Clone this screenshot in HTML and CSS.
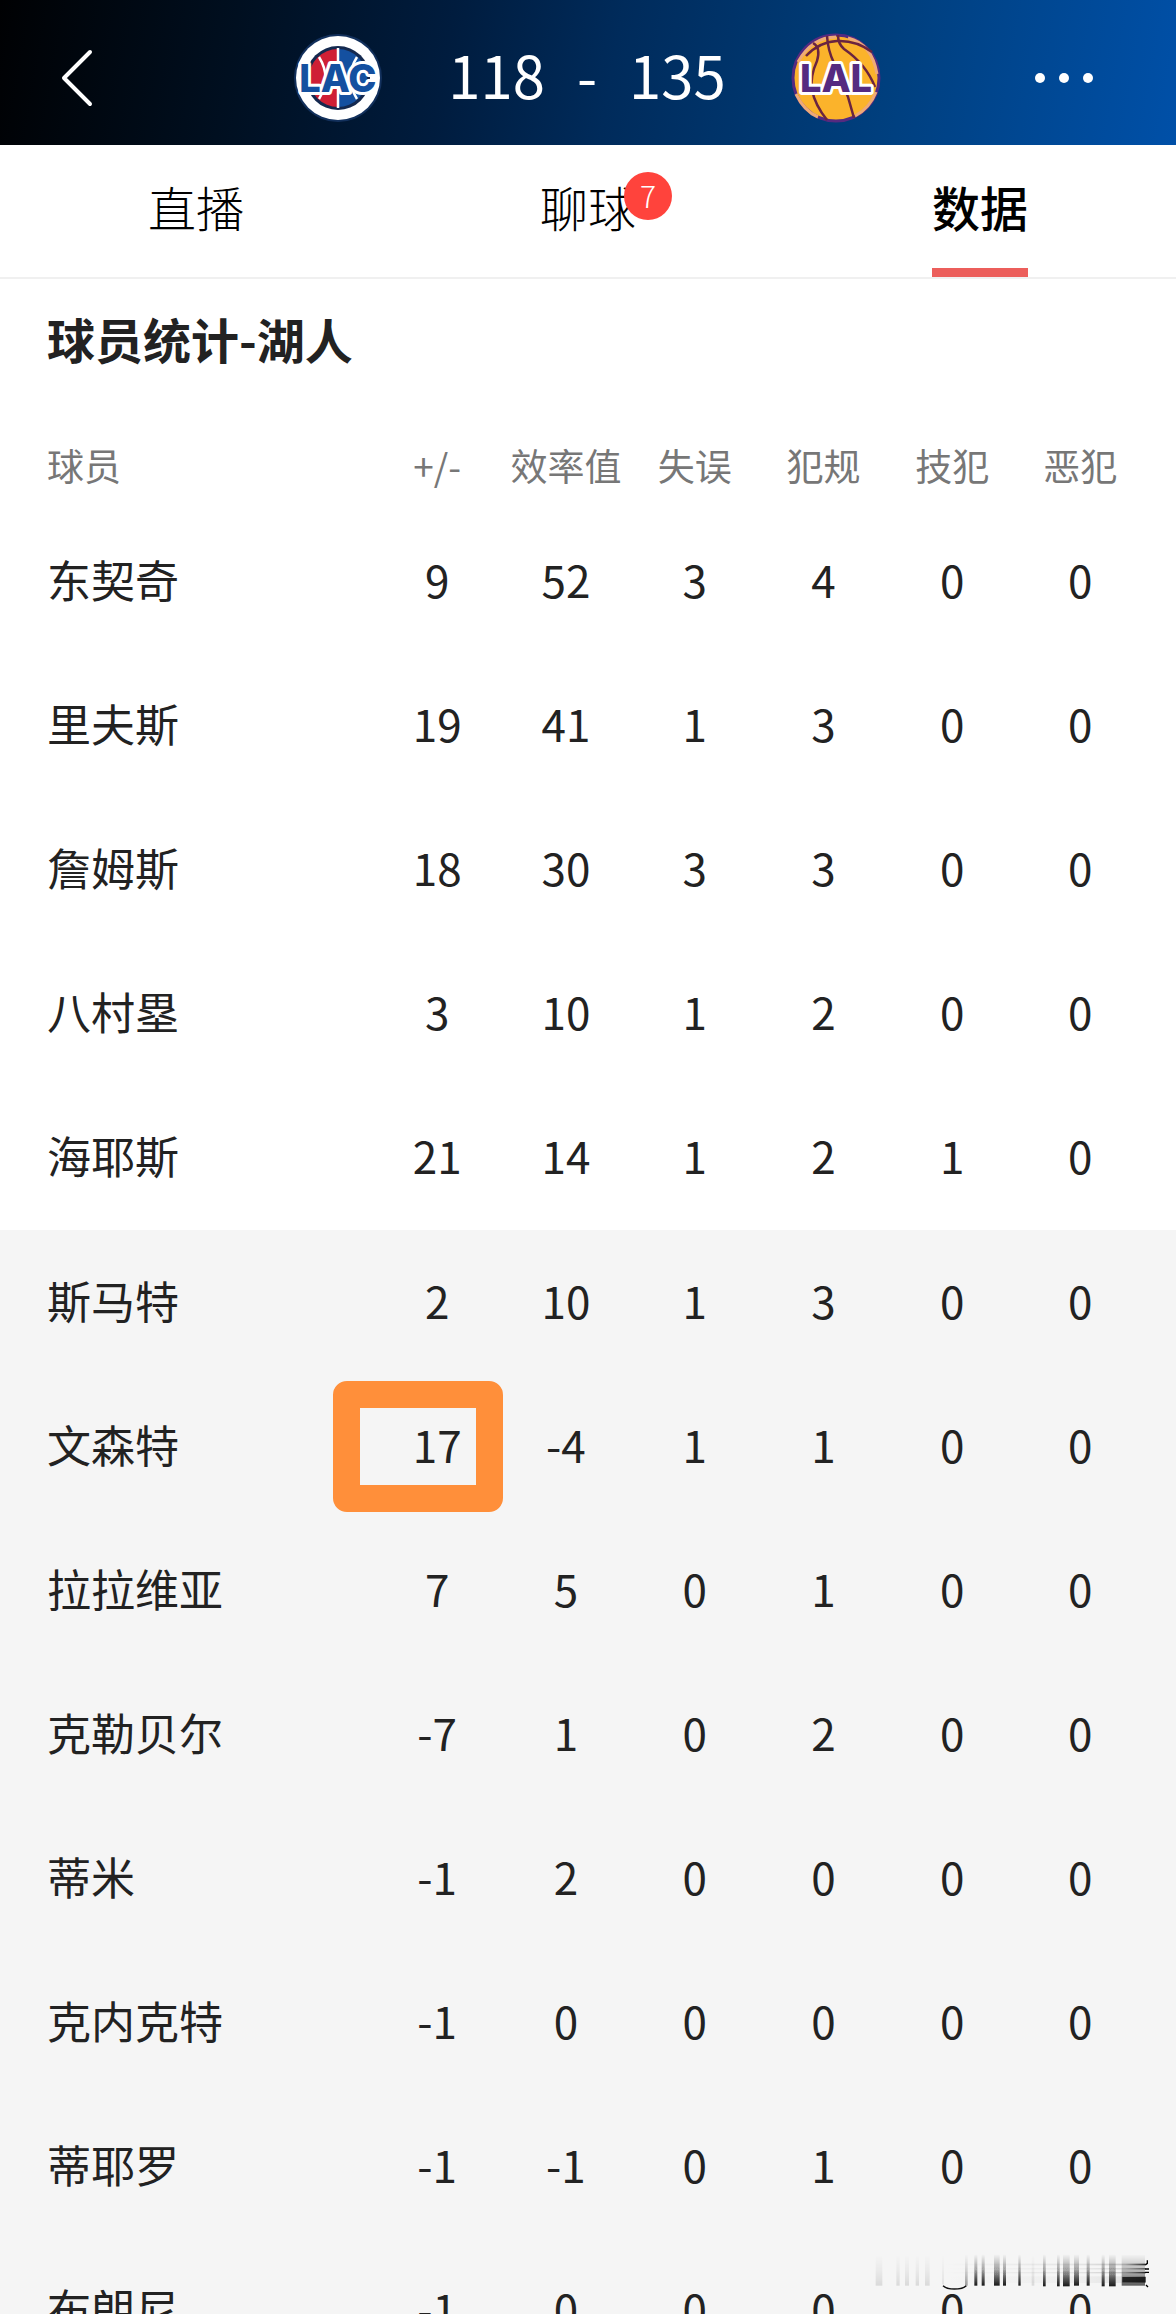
FILE: index.html
```html
<!DOCTYPE html>
<html lang="zh-CN">
<head>
    <meta charset="UTF-8">
    <meta name="viewport" content="width=device-width, initial-scale=1.0">
    <title>118 - 135</title>
    <link rel="stylesheet" href="styles.css">
</head>
<body>
    <header class="topbar">
        <button class="icon-button" type="button" aria-label="返回">
            <svg width="34" height="58" viewBox="0 0 34 58" fill="none" stroke="#fff" stroke-width="4" stroke-linecap="round" stroke-linejoin="round">
                <path d="M30 3L4 29L30 55"/>
            </svg>
        </button>
        <div class="match">
            <svg class="logo" viewBox="0 0 92 92">
                <circle cx="46" cy="46" r="44" fill="#12305c"/>
                <circle cx="46" cy="46" r="42" fill="#fff"/>
                <circle cx="46" cy="46" r="32" fill="#14294f"/>
                <path d="M46 17A29 29 0 0 0 46 75Z" fill="#cf1f35"/>
                <path d="M46 17A29 29 0 0 1 46 75Z" fill="#1450a0"/>
                <path d="M46 16V76M27 25Q40 46 27 67M65 25Q52 46 65 67" fill="none" stroke="#fff" stroke-width="2.5"/>
                <text class="logo-text lac" x="46" y="60">LAC</text>
            </svg>
            <div class="score">
                <span>118</span>
                <span>-</span>
                <span>135</span>
            </div>
            <svg class="logo" viewBox="0 0 92 92">
                <circle cx="46" cy="46" r="43" fill="#fbb32b" stroke="#552a80" stroke-width="3"/>
                <path d="M8 30Q22 5 46 5M58 6Q82 12 87 42M6 62Q14 79 28 85M65 84Q80 76 86 60" fill="none" stroke="#eeaa78" stroke-width="3"/>
                <g fill="none" stroke="#6a2440" stroke-width="2.5">
                    <path d="M16 24Q29 10 47 9Q66 8 82 20"/>
                    <path d="M23 11Q31 15 27 29Q20 44 22 58Q25 73 37 88"/>
                    <path d="M37 4Q38 19 44 31L58 65L64 86"/>
                    <path d="M48 3Q48 12 54 17Q76 32 85 55"/>
                </g>
                <text class="logo-text lal" x="46" y="60">LAL</text>
            </svg>
        </div>
        <button class="icon-button" type="button" aria-label="更多">
            <svg width="60" height="12" viewBox="0 0 60 12" fill="#fff">
                <circle cx="6" cy="6" r="5"/>
                <circle cx="30" cy="6" r="5"/>
                <circle cx="54" cy="6" r="5"/>
            </svg>
        </button>
    </header>

    <nav class="tabs">
        <a class="tab" href="#live">直播</a>
        <a class="tab" href="#chat"><span class="tab-label">聊球<span class="badge">7</span></span></a>
        <a class="tab active" href="#stats">数据</a>
    </nav>

    <main class="stats" id="stats">
        <h1>球员统计-湖人</h1>
        <table>
            <thead>
                <tr>
                    <th>球员</th>
                    <th>+/-</th>
                    <th>效率值</th>
                    <th>失误</th>
                    <th>犯规</th>
                    <th>技犯</th>
                    <th>恶犯</th>
                </tr>
            </thead>
            <tbody>
                <tr><td>东契奇</td><td>9</td><td>52</td><td>3</td><td>4</td><td>0</td><td>0</td></tr>
                <tr><td>里夫斯</td><td>19</td><td>41</td><td>1</td><td>3</td><td>0</td><td>0</td></tr>
                <tr><td>詹姆斯</td><td>18</td><td>30</td><td>3</td><td>3</td><td>0</td><td>0</td></tr>
                <tr><td>八村塁</td><td>3</td><td>10</td><td>1</td><td>2</td><td>0</td><td>0</td></tr>
                <tr><td>海耶斯</td><td>21</td><td>14</td><td>1</td><td>2</td><td>1</td><td>0</td></tr>
            </tbody>
            <tbody class="bench">
                <tr><td>斯马特</td><td>2</td><td>10</td><td>1</td><td>3</td><td>0</td><td>0</td></tr>
                <tr><td>文森特</td><td class="marked">17</td><td>-4</td><td>1</td><td>1</td><td>0</td><td>0</td></tr>
                <tr><td>拉拉维亚</td><td>7</td><td>5</td><td>0</td><td>1</td><td>0</td><td>0</td></tr>
                <tr><td>克勒贝尔</td><td>-7</td><td>1</td><td>0</td><td>2</td><td>0</td><td>0</td></tr>
                <tr><td>蒂米</td><td>-1</td><td>2</td><td>0</td><td>0</td><td>0</td><td>0</td></tr>
                <tr><td>克内克特</td><td>-1</td><td>0</td><td>0</td><td>0</td><td>0</td><td>0</td></tr>
                <tr><td>蒂耶罗</td><td>-1</td><td>-1</td><td>0</td><td>1</td><td>0</td><td>0</td></tr>
                <tr><td>布朗尼</td><td>-1</td><td>0</td><td>0</td><td>0</td><td>0</td><td>0</td></tr>
            </tbody>
        </table>
    </main>

    <!-- smeared watermark strip -->
    <svg class="watermark" width="280" height="38" viewBox="0 0 840 114" aria-hidden="true">
        <defs>
            <linearGradient id="fade" x1="0" y1="0" x2="0" y2="1">
                <stop offset="0" stop-color="#111" stop-opacity="0"/>
                <stop offset="0.5" stop-color="#111" stop-opacity="0.35"/>
                <stop offset="1" stop-color="#000" stop-opacity="0.9"/>
            </linearGradient>
            <linearGradient id="side" x1="0" y1="0" x2="1" y2="0">
                <stop offset="0" stop-color="#111" stop-opacity="0"/>
                <stop offset="0.7" stop-color="#111" stop-opacity="0.08"/>
                <stop offset="0.9" stop-color="#111" stop-opacity="0.2"/>
                <stop offset="1" stop-color="#000" stop-opacity="0.8"/>
            </linearGradient>
            <filter id="soft" x="-2%" y="-10%" width="104%" height="120%">
                <feGaussianBlur stdDeviation="2 0.5"/>
            </filter>
        </defs>
        <g fill="url(#fade)" filter="url(#soft)">
            <g opacity="0.12">
                <rect x="2" y="4" width="20" height="94"/>
                <rect x="64" y="4" width="10" height="94"/>
                <rect x="90" y="4" width="12" height="94"/>
                <rect x="122" y="4" width="10" height="94"/>
                <rect x="150" y="4" width="14" height="94"/>
                <rect x="202" y="4" width="4" height="90"/>
                <rect x="470" y="4" width="8" height="94"/>
            </g>
            <rect x="270" y="4" width="8" height="94" opacity="0.4"/>
            <rect x="298" y="4" width="9" height="94"/>
            <rect x="320" y="4" width="9" height="94"/>
            <rect x="357" y="4" width="17" height="94"/>
            <rect x="384" y="4" width="9" height="94"/>
            <rect x="430" y="4" width="7" height="94"/>
            <rect x="504" y="4" width="8" height="96"/>
            <rect x="546" y="4" width="8" height="96"/>
            <rect x="564" y="4" width="20" height="96"/>
            <rect x="597" y="4" width="15" height="94"/>
            <rect x="635" y="4" width="9" height="94"/>
            <rect x="680" y="4" width="9" height="96"/>
            <rect x="702" y="4" width="20" height="96"/>
            <rect x="740" y="4" width="70" height="94" opacity="0.7"/>
        </g>
        <g fill="url(#side)">
            <rect x="200" y="32" width="612" height="5"/>
            <rect x="200" y="46" width="612" height="3"/>
            <rect x="200" y="57" width="612" height="4"/>
            <rect x="200" y="70" width="612" height="20" opacity="0.4"/>
        </g>
        <path d="M742 72H812V88H742Z" fill="#0c0c0c" opacity="0.8"/>
        <path d="M204 98Q214 108 238 108Q264 108 274 98" fill="none" stroke="#111" stroke-width="4"/>
        <path d="M817 22V31L811 36M810 48H822M810 58H822M813 96L819 102" fill="none" stroke="#000" stroke-width="4"/>
    </svg>
</body>
</html>
```
FILE: styles.css
```css
*, *::after {
    box-sizing: border-box;
}
body {
    position: relative;
    display: flex;
    flex-direction: column;
    height: 100vh;
    margin: 0;
    overflow: hidden;
    background-color: #fff;
    color: #222;
    font-family: "Noto Sans CJK SC", sans-serif;
}

/* score header */
.topbar {
    display: flex;
    flex-shrink: 0;
    align-items: center;
    justify-content: space-between;
    padding: 32px 82px 21px 60px;
    background: linear-gradient(100deg, #000103 0%, #000f20 20%, #001c3e 38%, #002b5b 52%, #003f7e 75%, #0050a8 100%);
    color: #fff;
}
.icon-button {
    display: flex;
    align-items: center;
    width: 60px;
    padding: 0;
    border: none;
    background: none;
    cursor: pointer;
}
.match {
    display: flex;
    align-items: center;
    gap: 64px;
    padding-left: 20px;
}
.logo {
    width: 92px;
    height: 92px;
    overflow: visible;
}
.logo-text {
    font-family: Inter, "Liberation Sans", sans-serif;
    font-size: 38px;
    font-weight: 800;
    text-anchor: middle;
    stroke: #fff;
    stroke-width: 6px;
    stroke-linejoin: round;
    paint-order: stroke;
}
.lac {
    fill: #1450a0;
}
.lal {
    fill: #552a80;
}
.score {
    display: flex;
    gap: 32px;
    padding-bottom: 8px;
    font-size: 58px;
    line-height: 84px;
}

/* tabs */
.tabs {
    display: grid;
    flex-shrink: 0;
    grid-template-columns: repeat(3, 1fr);
    justify-items: center;
    border-bottom: 2px solid #f0f0f0;
}
.tab {
    padding: 29px 0 30px;
    border-bottom: 9px solid transparent;
    color: #000;
    font-size: 48px;
    font-weight: 300;
    line-height: 64px;
    text-decoration: none;
}
.tab.active {
    border-color: #ec5e5b;
    font-weight: 500;
}
.tab-label {
    position: relative;
}
.badge {
    position: absolute;
    top: 1px;
    left: 84px;
    width: 48px;
    height: 48px;
    border-radius: 50%;
    background-color: #ff433c;
    color: #fff;
    font-size: 30px;
    line-height: 46px;
    text-align: center;
}

/* player table */
.stats {
    flex: 1;
    min-height: 0;
    overflow: hidden;
}
h1 {
    margin: 0;
    padding: 27px 47px 33px;
    font-size: 48px;
    line-height: 64px;
}
table {
    width: 100%;
    border-collapse: collapse;
    table-layout: fixed;
}
th, td {
    width: 10.95%;
    padding: 0 0 6px;
    text-align: center;
    white-space: nowrap;
}
th {
    height: 107px;
    padding: 16px 0 0;
    color: #777;
    font-size: 37px;
    font-weight: 400;
}
td {
    height: 144px;
    font-size: 44px;
}
th:first-child, td:first-child {
    width: 31.7%;
    padding-left: 47px;
    text-align: left;
}
th:last-child, td:last-child {
    width: 13.55%;
    padding-right: 32px;
}
.bench {
    background-color: #f5f5f5;
}
.bench td {
    padding-bottom: 4px;
}
.marked {
    position: relative;
}
.marked::after {
    content: "";
    position: absolute;
    top: 7px;
    right: -1px;
    width: 170px;
    height: 131px;
    border: 27px solid #ff8f3a;
    border-radius: 14px;
}

.watermark {
    position: absolute;
    right: 21px;
    bottom: 23px;
}
```
